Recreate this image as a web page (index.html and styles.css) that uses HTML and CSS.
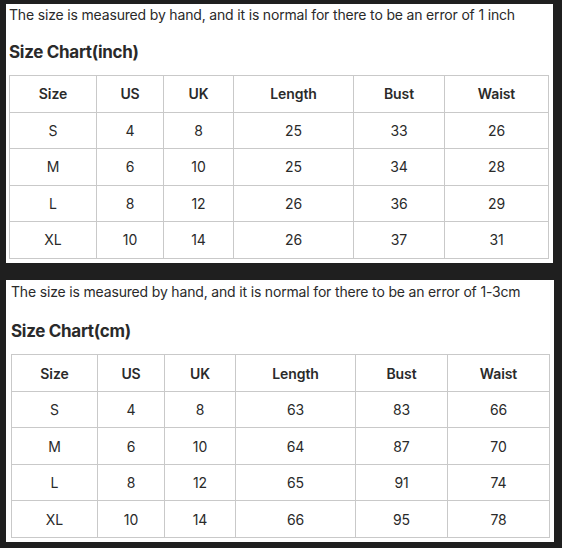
FILE: index.html
```html
<!DOCTYPE html>
<html>
<head>
<meta charset="utf-8">
<link rel="stylesheet" href="styles.css">
</head>
<body>
<div class="page">
  <section class="panel panel-inch">
    <p class="note">The size is measured by hand, and it is normal for there to be an error of 1 inch</p>
    <h2 class="title">Size Chart(inch)</h2>
    <table class="chart chart-inch">
      <colgroup><col class="c1"><col class="c2"><col class="c3"><col class="c4"><col class="c5"><col class="c6"></colgroup>
      <tr><th>Size</th><th>US</th><th>UK</th><th>Length</th><th>Bust</th><th>Waist</th></tr>
      <tr><td>S</td><td>4</td><td>8</td><td>25</td><td>33</td><td>26</td></tr>
      <tr><td>M</td><td>6</td><td>10</td><td>25</td><td>34</td><td>28</td></tr>
      <tr><td>L</td><td>8</td><td>12</td><td>26</td><td>36</td><td>29</td></tr>
      <tr><td>XL</td><td>10</td><td>14</td><td>26</td><td>37</td><td>31</td></tr>
    </table>
  </section>
  <section class="panel panel-cm">
    <p class="note">The size is measured by hand, and it is normal for there to be an error of 1-3cm</p>
    <h2 class="title">Size Chart(cm)</h2>
    <table class="chart chart-cm">
      <colgroup><col class="c1"><col class="c2"><col class="c3"><col class="c4"><col class="c5"><col class="c6"></colgroup>
      <tr><th>Size</th><th>US</th><th>UK</th><th>Length</th><th>Bust</th><th>Waist</th></tr>
      <tr><td>S</td><td>4</td><td>8</td><td>63</td><td>83</td><td>66</td></tr>
      <tr><td>M</td><td>6</td><td>10</td><td>64</td><td>87</td><td>70</td></tr>
      <tr><td>L</td><td>8</td><td>12</td><td>65</td><td>91</td><td>74</td></tr>
      <tr><td>XL</td><td>10</td><td>14</td><td>66</td><td>95</td><td>78</td></tr>
    </table>
  </section>
</div>
</body>
</html>
```
FILE: styles.css
```css
html, body {
  margin: 0;
  padding: 0;
  background: #1f1f1f;
}
body {
  font-family: Inter, "Noto Sans", sans-serif;
  color: #2a2a2a;
  width: 562px;
  height: 548px;
  overflow: hidden;
}
.page {
  display: flex;
  flex-direction: column;
  padding: 4px 0 0 6px;
  gap: 17px;
}
.panel {
  background: #fff;
  box-sizing: border-box;
}
.panel-inch {
  width: 547px;
  height: 259px;
  padding: 1px 5px 0 3px;
}
.panel-cm {
  width: 548px;
  height: 262px;
  padding: 2px 5px 0 5px;
}
.note {
  margin: 0;
  font-size: 14px;
  line-height: 20px;
  letter-spacing: -0.17px;
}
.title {
  margin: 15px 0 11px;
  font-size: 17px;
  line-height: 24px;
  font-weight: 700;
  letter-spacing: -0.3px;
}
.panel-cm .title {
  margin-top: 17px;
}
.chart {
  border-collapse: collapse;
  table-layout: fixed;
  font-size: 14px;
  letter-spacing: -0.1px;
}
.chart-inch { width: 539px; }
.chart-cm { width: 538px; }
.chart th, .chart td {
  border: 1px solid #c9c9c9;
  text-align: center;
  padding: 8px 0 7px;
  line-height: 20.5px;
}
.chart-cm th, .chart-cm td {
  padding: 8.5px 0 6.5px;
}
.chart th {
  font-weight: 600;
}
.chart-inch .c1 { width: 87px; }
.chart-inch .c2 { width: 67px; }
.chart-inch .c3 { width: 70px; }
.chart-inch .c4 { width: 120px; }
.chart-inch .c5 { width: 91px; }
.chart-inch .c6 { width: 104px; }
.chart-cm .c1 { width: 86px; }
.chart-cm .c2 { width: 67px; }
.chart-cm .c3 { width: 71px; }
.chart-cm .c4 { width: 120px; }
.chart-cm .c5 { width: 92px; }
.chart-cm .c6 { width: 102px; }
```
